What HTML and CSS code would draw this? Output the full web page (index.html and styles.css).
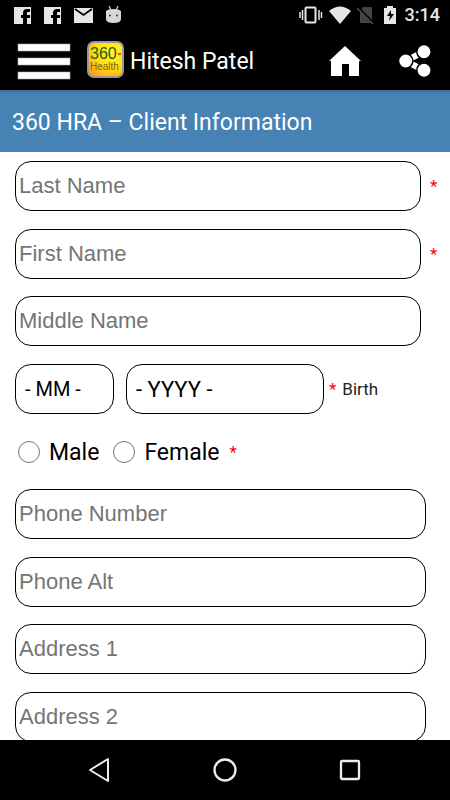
FILE: index.html
```html
<!DOCTYPE html>
<html lang="en">
<head>
<meta charset="utf-8">
<meta name="viewport" content="width=device-width, initial-scale=1">
<title>360 HRA – Client Information</title>
<link rel="stylesheet" href="styles.css">
</head>
<body>
<div class="status">
  <div class="status-group">
    <svg width="18" height="18" viewBox="0 0 18 18"><path fill="#e6e6e6" d="M0 1h17v17h-4v-6h3V9h-3V7q0-1 1-1h2V3h-3q-4 0-4 4v2H7v3h2v6H0z"/></svg>
    <svg width="18" height="18" viewBox="0 0 18 18"><path fill="#e6e6e6" d="M0 1h17v17h-4v-6h3V9h-3V7q0-1 1-1h2V3h-3q-4 0-4 4v2H7v3h2v6H0z"/></svg>
    <svg width="20" height="16" viewBox="0 0 20 16"><path fill="#e6e6e6" d="M0 1h19v15H0z"/><path d="M1 2l8.500 6L18 2" fill="none" stroke="#000" stroke-width="1.800"/></svg>
    <svg width="16" height="18" viewBox="0 0 16 18"><path d="M3 0l2 4M12 0l-2 4" stroke="#ccc" stroke-width="1.300"/><path fill="#d6d6d6" d="M0 5q2-2 7.500-2T15 5v8q0 4-7.500 4T0 13z"/><circle cx="4" cy="9.500" r="1" fill="#333"/><circle cx="11" cy="9.500" r="1" fill="#333"/></svg>
  </div>
  <div class="status-group status-right">
    <svg width="24" height="18" viewBox="0 0 24 18" fill="none" stroke="#e6e6e6"><rect x="6.500" y="1.500" width="10" height="15" rx="1" stroke-width="2"/><path d="M1 6v6M3.500 4v10M20 4v10M22.500 6v6" stroke-width="1.500"/></svg>
    <svg width="24" height="18" viewBox="0 0 24 18"><path fill="#e6e6e6" d="M1 5q11-9 22 0L12 18z"/></svg>
    <svg width="18" height="18" viewBox="0 0 18 18"><path fill="#444" d="M6 1h8q1 0 1 1v15H3V5z"/><path d="M0 1l16 16" stroke="#000" stroke-width="3"/><path d="M0 2l16 16" stroke="#555" stroke-width="1.300"/></svg>
    <svg class="battery" width="12" height="18" viewBox="0 0 12 18"><path fill="#e6e6e6" d="M0 2h3V0h6v2h3v16H0z"/><path d="M7 4l-4 6h3l-1 5 5-7H7z"/></svg>
    <time>3:14</time>
  </div>
</div>
<header class="appbar">
  <button class="icon-button menu" type="button" aria-label="Menu"><svg width="54" height="38" viewBox="0 0 54 38"><g fill="#fff" stroke="#aaa" stroke-width=".6"><rect x="1" y="1" width="52" height="7"/><rect x="1" y="15" width="52" height="7"/><rect x="1" y="29" width="52" height="7"/></g></svg></button>
  <svg class="logo" width="37" height="37" viewBox="0 0 37 37" role="img" aria-label="360 Health">
    <defs><radialGradient id="sun" cx=".7" cy=".25" r=".9"><stop offset="0" stop-color="#fff22a"/><stop offset=".55" stop-color="#ffdf10"/><stop offset="1" stop-color="#ff9d12"/></radialGradient></defs>
    <rect x="1" y="1" width="35" height="35" rx="6" fill="url(#sun)" stroke="#999" stroke-width="2"/>
    <text x="3" y="18" class="logo-number">360</text><text x="3" y="29" class="logo-word">Health</text>
    <path d="M31 13h3" stroke="#e44b19" stroke-width="2"/>
  </svg>
  <span class="user">Hitesh Patel</span>
  <button class="icon-button home" type="button" aria-label="Home"><svg width="34" height="32" viewBox="0 0 34 32"><path fill="#fff" d="M17 0l16 15h-2v15H21V18h-7v12H3V15H1z"/></svg></button>
  <button class="icon-button" type="button" aria-label="Share"><svg width="34" height="34" viewBox="0 0 34 34"><path d="M7.700 16L26 6.500M7.700 16L26 25.500" stroke="#fff" stroke-width="6"/><g fill="#fff" stroke="#000" stroke-width="1.500"><circle cx="7.700" cy="16" r="7.200"/><circle cx="26" cy="6.800" r="7.200"/><circle cx="26" cy="25.200" r="7.200"/></g></svg></button>
</header>
<h1 class="title">360 HRA – Client Information</h1>
<main class="content">
  <form>
    <div class="group">
      <div class="row"><input class="field" type="text" placeholder="Last Name" aria-label="Last Name"><span class="required">*</span></div>
      <div class="row"><input class="field" type="text" placeholder="First Name" aria-label="First Name"><span class="required">*</span></div>
    </div>
    <div class="group">
      <div class="row"><input class="field" type="text" placeholder="Middle Name" aria-label="Middle Name"><span class="required"></span></div>
      <div class="birth">
        <select class="field month" id="month" aria-label="Birth month"><option>- MM -</option></select>
        <select class="field year" id="year"><option>- YYYY -</option></select>
        <label for="year"><span class="star">*</span>Birth</label>
      </div>
    </div>
    <div class="gender">
      <label><input type="radio" name="gender">Male</label>
      <label><input type="radio" name="gender">Female</label>
      <span class="star">*</span>
    </div>
    <div class="group wide">
      <input class="field" type="tel" placeholder="Phone Number" aria-label="Phone Number">
      <input class="field" type="tel" placeholder="Phone Alt" aria-label="Phone Alt">
    </div>
    <div class="group wide">
      <input class="field" type="text" placeholder="Address 1" aria-label="Address 1">
      <input class="field" type="text" placeholder="Address 2" aria-label="Address 2">
    </div>
  </form>
</main>
<nav class="system">
  <button class="icon-button" type="button" aria-label="Back"><svg width="26" height="26" viewBox="0 0 26 26"><path d="M21 2v22L3 13z" fill="none" stroke="#eee" stroke-width="2" stroke-linejoin="round"/></svg></button>
  <button class="icon-button" type="button" aria-label="Home screen"><svg width="26" height="26" viewBox="0 0 26 26"><circle cx="13" cy="13" r="10.500" fill="none" stroke="#eee" stroke-width="2.300"/></svg></button>
  <button class="icon-button" type="button" aria-label="Recent apps"><svg width="26" height="26" viewBox="0 0 26 26"><rect x="4" y="4" width="18" height="18" rx="1" fill="none" stroke="#eee" stroke-width="2.300"/></svg></button>
</nav>
</body>
</html>
```
FILE: styles.css
```css
* { box-sizing: border-box; }

body {
  margin: 0;
  height: 100vh;
  display: flex;
  flex-direction: column;
  background: #fff;
  color: #000;
  font-family: Roboto, sans-serif;
}

svg { display: block; }

.status {
  flex: none;
  display: flex;
  justify-content: space-between;
  align-items: center;
  height: 30px;
  padding: 0 10px 0 14px;
  background: #000;
  color: #e6e6e6;
}

.status-group { display: flex; align-items: center; gap: 12px; }
.status-right { gap: 5px; }
.battery { margin-left: 4px; }

time {
  margin-left: 4px;
  font-size: 18px;
  font-weight: 500;
  line-height: 24px;
}

.appbar {
  flex: none;
  display: flex;
  align-items: center;
  height: 60px;
  padding: 3px 18px 0 17px;
  background: #000;
  color: #fff;
}

.icon-button {
  display: block;
  padding: 0;
  border: 0;
  background: none;
}

.menu { margin-right: 16px; }
.logo { margin-bottom: 4px; }
.home { margin-right: 36px; }

.logo-number, .logo-word { font-family: "Liberation Sans", sans-serif; }
.logo-number { font-size: 16px; fill: #2a5b12; }
.logo-word { font-size: 10px; fill: #80620c; }

.user {
  flex: 1;
  margin-left: 6px;
  font-size: 23px;
  line-height: 30px;
}

.title {
  flex: none;
  margin: 0;
  padding: 18px 12px 14px;
  background: linear-gradient(#3d6c94, #4682b4 4px);
  color: #fff;
  font-size: 23px;
  font-weight: 400;
  line-height: 30px;
}

.content {
  flex: 1;
  min-height: 0;
  overflow-y: auto;
  scrollbar-width: none;
  padding: 9px 12px 0 15px;
}

.group {
  display: grid;
  gap: 18px;
  margin-bottom: 17px;
}

.wide { padding-right: 12px; }

.row { display: flex; align-items: center; gap: 9px; }

.field {
  flex: 1;
  min-width: 0;
  height: 50px;
  margin: 0;
  padding: 0 3px;
  border: 1px solid #000;
  border-radius: 16px;
  background: #fff;
  color: #000;
  font: 22px "Liberation Sans", sans-serif;
  appearance: none;
}

.field::placeholder { color: #757575; opacity: 1; }

.required { flex: none; width: 8px; }
.required, .star { color: #f00; font-size: 17px; }

.birth { display: flex; align-items: center; }
.birth .field { padding: 0 9px; font-family: Roboto, sans-serif; }
.birth .month { flex: 0 1 99px; margin-right: 12px; font-size: 20px; }
.birth .year { flex: 0 1 198px; margin-right: 5px; }
.birth label { color: #222; font-size: 17px; }
.birth .star { margin-right: 6px; }

.gender {
  display: flex;
  align-items: center;
  gap: 14px;
  height: 30px;
  margin: 23px 0 22px 3px;
  font-size: 23px;
}

.gender label { display: flex; align-items: center; }
.gender .star { margin-left: -4px; }

.gender input {
  width: 22px;
  height: 22px;
  margin: 0 9px 0 0;
  border: 1px solid #777;
  border-radius: 50%;
  appearance: none;
}

.gender input:checked { background: #4682b4; }

.system {
  flex: none;
  display: flex;
  justify-content: center;
  align-items: center;
  gap: 99px;
  height: 60px;
  background: #000;
}
```
